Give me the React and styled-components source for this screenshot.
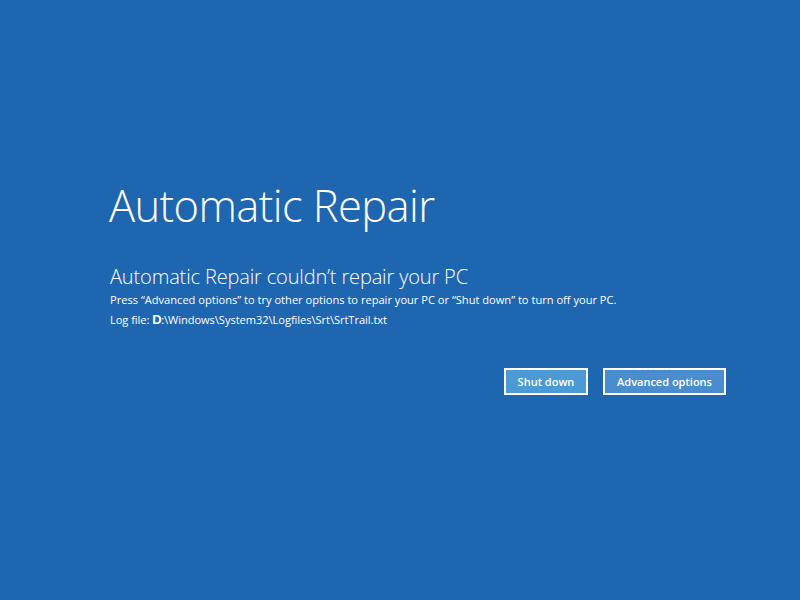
import React from "react";
import styled, { createGlobalStyle } from "styled-components";

const Global = createGlobalStyle`
  html, body { margin: 0; padding: 0; }
  body { background: #1f66b1; }
`;

const Screen = styled.div`
  width: 800px;
  height: 600px;
  background: #1f66b1;
  color: #ffffff;
  font-family: "Open Sans", "Noto Sans", sans-serif;
  box-sizing: border-box;
  padding: 180px 0 0 109px;
  display: flex;
  flex-direction: column;
`;

const Title = styled.h1`
  margin: 0;
  font-size: 43.5px;
  font-weight: 300;
  line-height: 52px;
  letter-spacing: -0.6px;
`;

const Subtitle = styled.h2`
  margin: 32px 0 0 1px;
  font-size: 20px;
  font-weight: 300;
  line-height: 26px;
  letter-spacing: -0.15px;
`;

const Line = styled.p`
  margin: 0 0 0 1px;
  font-size: 11.1px;
  line-height: 20px;
  font-weight: 400;
  letter-spacing: ${(p) => p.$ls || 0}px;
`;

const Drive = styled.span`
  font-family: "Liberation Sans", sans-serif;
  font-size: 13px;
  font-weight: 700;
  letter-spacing: -0.5px;
`;

const Actions = styled.div`
  display: flex;
  gap: 15px;
  margin: 38px 0 0;
  padding-left: 395px;
`;

const Button = styled.button`
  width: ${(p) => p.$w}px;
  height: 27px;
  box-sizing: border-box;
  padding: 0;
  border: 2px solid #ffffff;
  background: ${(p) => p.$bg};
  color: #ffffff;
  font-family: "Open Sans", "Noto Sans", sans-serif;
  font-weight: 600;
  font-size: 11px;
  cursor: pointer;
`;

export default function App() {
  return (
    <>
      <Global />
      <Screen>
        <Title>Automatic Repair</Title>
        <Subtitle>Automatic Repair couldn’t repair your PC</Subtitle>
        <Line>
          Press “Advanced options” to try other options to repair your PC or “Shut down” to turn off your PC.
        </Line>
        <Line $ls={-0.05}>
          Log file: <Drive>D</Drive>:\Windows\System32\Logfiles\Srt\SrtTrail.txt
        </Line>
        <Actions>
          <Button $bg="#4b9ad6" $w={84}>Shut down</Button>
          <Button $bg="#4a8dcf" $w={123}>Advanced options</Button>
        </Actions>
      </Screen>
    </>
  );
}
